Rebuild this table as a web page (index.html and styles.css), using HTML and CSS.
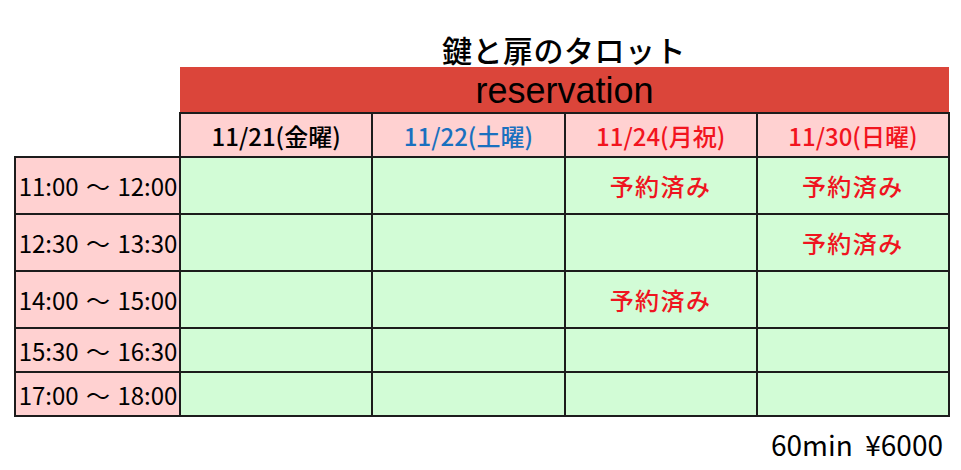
FILE: index.html
```html
<!DOCTYPE html>
<html lang="ja">
<head>
<meta charset="utf-8">
<link rel="stylesheet" href="styles.css">
</head>
<body>
<div class="page">
  <h1 class="title">鍵と扉のタロット</h1>
  <table class="schedule">
    <tr class="bar-row">
      <td class="blank"></td>
      <td class="bar" colspan="4">reservation</td>
    </tr>
    <tr class="head-row">
      <td class="blank"></td>
      <th class="day">11/21(金曜)</th>
      <th class="day sat">11/22(土曜)</th>
      <th class="day hol">11/24(月祝)</th>
      <th class="day hol">11/30(日曜)</th>
    </tr>
    <tr class="tall">
      <th class="time">11:00 〜 12:00</th>
      <td></td><td></td><td class="booked">予約済み</td><td class="booked">予約済み</td>
    </tr>
    <tr class="tall">
      <th class="time">12:30 〜 13:30</th>
      <td></td><td></td><td></td><td class="booked">予約済み</td>
    </tr>
    <tr class="tall">
      <th class="time">14:00 〜 15:00</th>
      <td></td><td></td><td class="booked">予約済み</td><td></td>
    </tr>
    <tr class="short">
      <th class="time">15:30 〜 16:30</th>
      <td></td><td></td><td></td><td></td>
    </tr>
    <tr class="short">
      <th class="time">17:00 〜 18:00</th>
      <td></td><td></td><td></td><td></td>
    </tr>
  </table>
  <p class="price">60min&nbsp; ¥6000</p>
</div>
</body>
</html>
```

FILE: styles.css
```css
html, body {
  margin: 0;
  padding: 0;
  background: #ffffff;
}

.page {
  width: 961px;
  height: 470px;
  padding-left: 14px;
  box-sizing: border-box;
  font-family: "Noto Sans CJK JP", "Noto Sans", sans-serif;
  color: #000;
}

.title {
  margin: 0 0 0 164px;
  width: 772px;
  padding-top: 31px;
  height: 36px;
  line-height: 36px;
  font-size: 30px;
  font-weight: 500;
  letter-spacing: 0.5px;
  text-align: center;
}

.schedule {
  border-collapse: collapse;
  table-layout: fixed;
  width: 936px;
}

.schedule td,
.schedule th {
  padding: 0;
  border: 2px solid #1c1c1c;
  background: #d2fcd6;
  text-align: center;
  vertical-align: middle;
  font-weight: normal;
}

.schedule td:first-child,
.schedule th:first-child {
  width: 165px;
}

.schedule td.blank {
  border: none;
  background: transparent;
}

.bar-row {
  height: 46px;
}

.schedule td.bar {
  border: none;
  background: #db453a;
  font-family: "Liberation Sans", Arial, sans-serif;
  font-size: 36px;
  line-height: 40px;
  padding-top: 3px;
  color: #000;
}

.head-row {
  height: 44px;
}

.schedule th.day {
  background: #ffd1d1;
  font-size: 24px;
  font-weight: 500;
  color: #000;
}

.schedule th.sat {
  color: #1a70bf;
}

.schedule th.hol {
  color: #f2141e;
}

.tall {
  height: 57px;
}

.short {
  height: 44px;
}

.schedule th.time {
  background: #ffd1d1;
  font-size: 24px;
  word-spacing: 2px;
  white-space: nowrap;
  padding-left: 1px;
}

.schedule td.booked {
  color: #ef1420;
  font-size: 24px;
  font-weight: 500;
  letter-spacing: 1.5px;
}

.price {
  margin: 12px 0 0;
  width: 929px;
  text-align: right;
  font-size: 28px;
  line-height: 30px;
}
```
